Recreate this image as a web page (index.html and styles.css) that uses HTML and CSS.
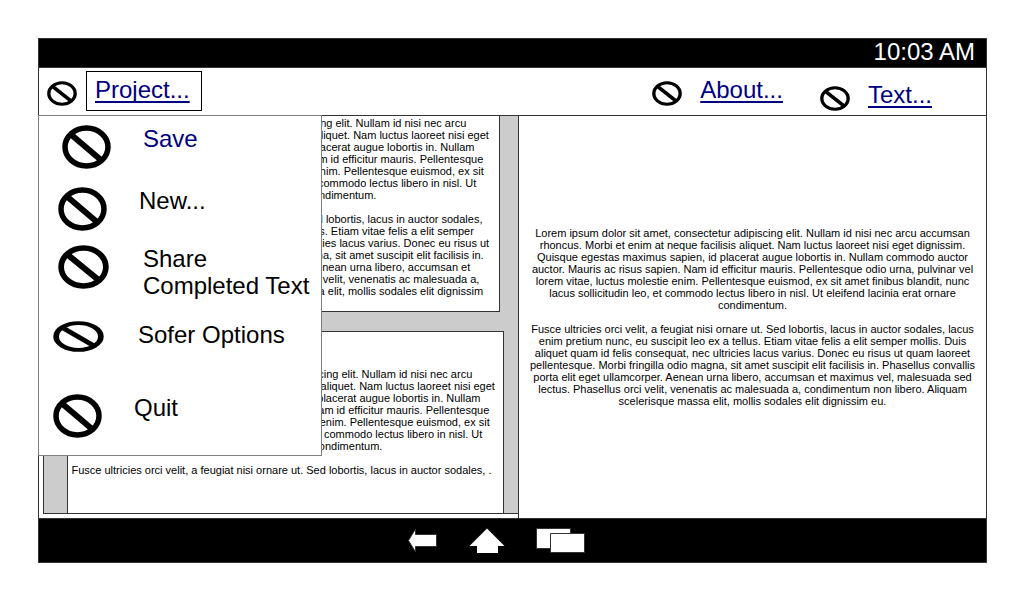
FILE: index.html
```html
<!DOCTYPE html>
<html lang="en">
<head>
<meta charset="utf-8">
<title>Project</title>
<link rel="stylesheet" href="styles.css">
</head>
<body>
<svg class="defs" aria-hidden="true">
  <symbol id="no" viewBox="0 0 49 44" preserveAspectRatio="none">
    <ellipse cx="24.5" cy="22" rx="21.5" ry="19" fill="none" stroke="#000" stroke-width="5.5"/>
    <path d="M9 9.500L39 35" stroke="#000" stroke-width="6"/>
  </symbol>
</svg>
<div class="device">
  <header class="status"><time>10:03 AM</time></header>
  <nav class="toolbar">
    <div class="tool">
      <svg class="tool-icon"><use href="#no"/></svg>
      <a class="tool-link boxed" href="#menu">Project...</a>
    </div>
    <div class="tool push">
      <svg class="tool-icon"><use href="#no"/></svg>
      <a class="tool-link" href="#about">About...</a>
    </div>
    <div class="tool lowered">
      <svg class="tool-icon"><use href="#no"/></svg>
      <a class="tool-link" href="#text">Text...</a>
    </div>
  </nav>
  <main class="panes">
    <section class="left">
      <div class="scroller">
        <article class="page first">
          <p>Lorem ipsum dolor sit amet, consectetur adipiscing elit. Nullam id nisi nec arcu<br>accumsan rhoncus. Morbi et enim at neque facilisis aliquet. Nam luctus laoreet nisi eget<br>dignissim. Quisque egestas maximus sapien, id placerat augue lobortis in. Nullam<br>commodo auctor auctor. Mauris ac risus sapien. Nam id efficitur mauris. Pellentesque<br>odio urna, pulvinar vel lorem vitae, luctus molestie enim. Pellentesque euismod, ex sit<br>amet finibus blandit, nunc lacus sollicitudin leo, et commodo lectus libero in nisl. Ut<br>eleifend lacinia erat ornare condimentum.</p>
          <p>Fusce ultricies orci velit, a feugiat nisi ornare ut. Sed lobortis, lacus in auctor sodales,<br>lacus enim pretium nunc, eu suscipit leo ex a tellus. Etiam vitae felis a elit semper<br>mollis. Duis aliquet quam id felis consequat, nec ultricies lacus varius. Donec eu risus ut<br>quam laoreet pellentesque. Morbi fringilla odio magna, sit amet suscipit elit facilisis in.<br>Phasellus convallis porta elit eget ullamcorper. Aenean urna libero, accumsan et<br>maximus vel, malesuada sed lectus. Phasellus orci velit, venenatis ac malesuada a,<br>condimentum non libero. Aliquam scelerisque massa elit, mollis sodales elit dignissim</p>
        </article>
        <article class="page second">
          <p>Lorem ipsum dolor sit amet, consectetur adipiscing elit. Nullam id nisi nec arcu<br>accumsan rhoncus. Morbi et enim at neque facilisis aliquet. Nam luctus laoreet nisi eget<br>dignissim. Quisque egestas maximus sapien, id placerat augue lobortis in. Nullam<br>commodo auctor auctor. Mauris ac risus sapien. Nam id efficitur mauris. Pellentesque<br>odio urna, pulvinar vel lorem vitae, luctus molestie enim. Pellentesque euismod, ex sit<br>amet finibus blandit, nunc lacus sollicitudin leo, et commodo lectus libero in nisl. Ut<br>eleifend lacinia erat ornare condimentum.</p>
          <p>Fusce ultricies orci velit, a feugiat nisi ornare ut. Sed lobortis, lacus in auctor sodales, .</p>
        </article>
      </div>
    </section>
    <section class="right">
      <p>Lorem ipsum dolor sit amet, consectetur adipiscing elit. Nullam id nisi nec arcu accumsan<br>rhoncus. Morbi et enim at neque facilisis aliquet. Nam luctus laoreet nisi eget dignissim.<br>Quisque egestas maximus sapien, id placerat augue lobortis in. Nullam commodo auctor<br>auctor. Mauris ac risus sapien. Nam id efficitur mauris. Pellentesque odio urna, pulvinar vel<br>lorem vitae, luctus molestie enim. Pellentesque euismod, ex sit amet finibus blandit, nunc<br>lacus sollicitudin leo, et commodo lectus libero in nisl. Ut eleifend lacinia erat ornare<br>condimentum.</p>
      <p>Fusce ultricies orci velit, a feugiat nisi ornare ut. Sed lobortis, lacus in auctor sodales, lacus<br>enim pretium nunc, eu suscipit leo ex a tellus. Etiam vitae felis a elit semper mollis. Duis<br>aliquet quam id felis consequat, nec ultricies lacus varius. Donec eu risus ut quam laoreet<br>pellentesque. Morbi fringilla odio magna, sit amet suscipit elit facilisis in. Phasellus convallis<br>porta elit eget ullamcorper. Aenean urna libero, accumsan et maximus vel, malesuada sed<br>lectus. Phasellus orci velit, venenatis ac malesuada a, condimentum non libero. Aliquam<br>scelerisque massa elit, mollis sodales elit dignissim eu.</p>
    </section>
    <div class="menu" id="menu">
      <button class="item in-far save" type="button"><svg class="item-icon"><use href="#no"/></svg><span>Save</span></button>
      <button class="item in-mid" type="button"><svg class="item-icon"><use href="#no"/></svg><span>New...</span></button>
      <button class="item in-mid wide" type="button"><svg class="item-icon"><use href="#no"/></svg><span>Share<br>Completed Text</span></button>
      <button class="item wide flat" type="button"><svg class="item-icon"><use href="#no"/></svg><span>Sofer Options</span></button>
      <button class="item" type="button"><svg class="item-icon"><use href="#no"/></svg><span>Quit</span></button>
    </div>
  </main>
  <footer class="navbar">
    <button class="nav-btn" type="button" aria-label="Back">
      <svg width="30" height="26" viewBox="0 0 30 26"><path d="M.5 12.500L7.500 1V6.500H28.500V18.500H7.500V24Z" fill="#fff" stroke="#333"/></svg>
    </button>
    <button class="nav-btn" type="button" aria-label="Home">
      <svg width="36" height="26" viewBox="0 0 36 26"><path d="M18 .5L35.500 18H29V25H8V18H.5Z" fill="#fff"/></svg>
    </button>
    <button class="nav-btn" type="button" aria-label="Recent">
      <svg width="50" height="26" viewBox="0 0 50 26"><g fill="#fff" stroke="#333"><path d="M.5.5H34.500V20.500H.5Z"/><path d="M14.500 5.500H48.500V24.500H14.500Z"/></g></svg>
    </button>
  </footer>
</div>
</body>
</html>
```

FILE: styles.css
```css
* { box-sizing: border-box; }
body {
  margin: 0;
  padding: 38px 37px 37px 38px;
  min-height: 100vh;
  display: flex;
  background: #fff;
  color: #000;
  font: 24px/27px "Liberation Sans", Arial, sans-serif;
}
.defs { position: absolute; width: 0; height: 0; }
button { font: inherit; color: inherit; background: none; border: 0; padding: 0; text-align: left; }
p { margin: 0; }
svg { display: block; flex: none; }

.device { flex: 1; display: flex; flex-direction: column; border: 1px solid #333; }
.status { background: #000; color: #fff; line-height: 26px; text-align: right; padding: 0 11px 2px; border-bottom: 1px solid #333; }

.toolbar { display: flex; height: 48px; padding: 3px 54px 0 8px; gap: 37px; border-bottom: 1px solid #333; }
.tool { display: flex; align-items: flex-start; }
.tool-icon { width: 30px; height: 25px; margin-top: 10px; }
.tool-link {
  margin-left: 18px;
  padding-top: 5px;
  color: #000080;
  text-decoration-thickness: 2px;
  text-underline-offset: 3px;
  text-decoration-skip-ink: none;
}
.boxed { margin-left: 9px; padding: 4px 11px 7px 8px; border: 1px solid #000; }
.push { margin-left: auto; }
.lowered { padding-top: 5px; }

.panes { position: relative; flex: 1; display: flex; font-size: 11px; line-height: 12px; text-align: center; white-space: nowrap; }
.panes p + p { margin-top: 12px; }
.left { flex: 0 0 480px; padding: 0 0 4px 4px; border-right: 1px solid #333; overflow: hidden; }
.scroller { height: 100%; padding: 0 14px 0 23px; background: #ccc; border: 1px solid #333; border-width: 0 0 1px 1px; }
.page { background: #fff; border: 1px solid #333; }
.first { margin-right: 4px; border-top: 0; padding: 1px 8px 14px 0; }
.first p { margin-left: -8px; }
.second { margin-top: 19px; padding: 36px 8px 37px 0; border-bottom: 0; }
.right { flex: 1; display: flex; flex-direction: column; justify-content: center; }

.menu {
  position: absolute;
  top: -1px;
  left: -1px;
  width: 284px;
  height: 341px;
  padding: 9px 0 0 14px;
  display: grid;
  grid-template-rows: 62px 58px 76px 73px auto;
  background: #fff;
  border: 1px solid #808080;
  font-size: 24px;
  line-height: 27px;
}
.item { display: flex; align-items: flex-start; gap: 32px; }
.item-icon { width: 49px; height: 44px; }
.in-mid { padding-left: 5px; }
.in-far { padding-left: 9px; }
.wide { gap: 34px; }
.wide .item-icon { width: 51px; }
.flat .item-icon { height: 31px; }
.save { color: #000080; }

.navbar { display: flex; gap: 31px; height: 44px; padding: 9px 0 0 369px; background: #000; border-top: 1px solid #333; }
.nav-btn { align-self: flex-start; }
```
